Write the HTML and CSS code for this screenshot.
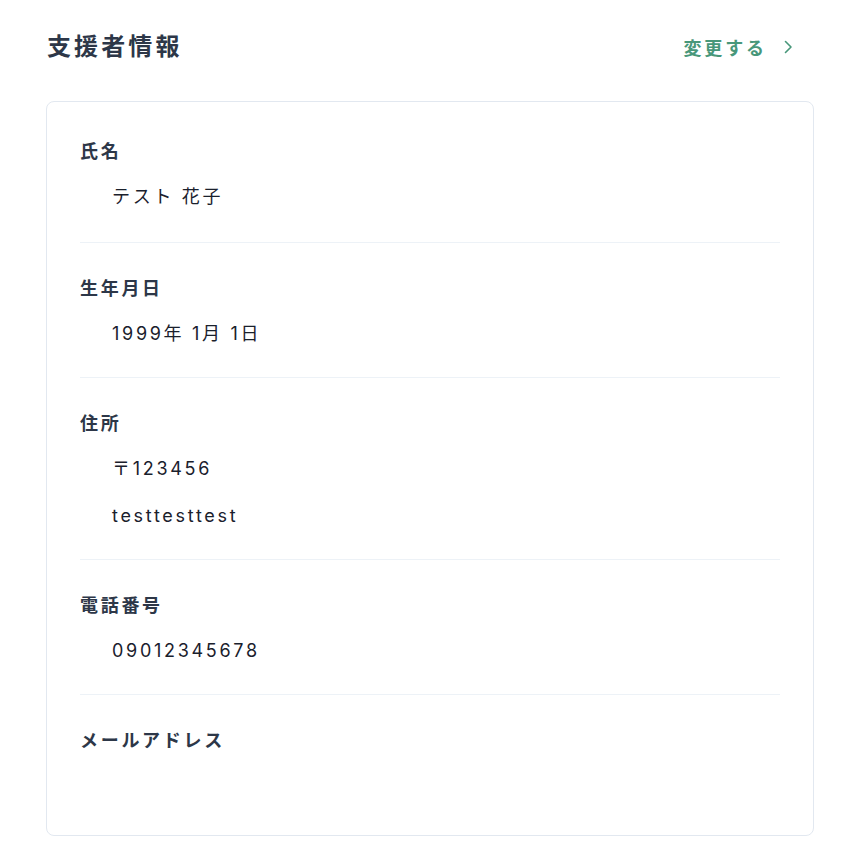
FILE: index.html
```html
<!DOCTYPE html>
<html lang="ja">
<head>
<meta charset="utf-8">
<link rel="stylesheet" href="styles.css">
</head>
<body>
<div class="page">
  <div class="header">
    <h1 class="title">支援者情報</h1>
    <a class="edit-link" href="#">変更する
      <svg class="chevron" width="10" height="14" viewBox="0 0 10 14"><path d="M2.5 1.5 L8 7 L2.5 12.5" fill="none" stroke="currentColor" stroke-width="1.6" stroke-linecap="round" stroke-linejoin="round"/></svg>
    </a>
  </div>
  <div class="card">
    <div class="item">
      <div class="label">氏名</div>
      <div class="values"><div class="value">テスト 花子</div></div>
    </div>
    <div class="item">
      <div class="label">生年月日</div>
      <div class="values"><div class="value">1999年 1月 1日</div></div>
    </div>
    <div class="item">
      <div class="label">住所</div>
      <div class="values">
        <div class="value">〒123456</div>
        <div class="value">testtesttest</div>
      </div>
    </div>
    <div class="item">
      <div class="label">電話番号</div>
      <div class="values"><div class="value">09012345678</div></div>
    </div>
    <div class="item last">
      <div class="label">メールアドレス</div>
      <div class="values"><div class="value empty"></div></div>
    </div>
  </div>
</div>
</body>
</html>
```

FILE: styles.css
```css
html, body {
  margin: 0;
  padding: 0;
  background: #ffffff;
}
body {
  font-family: "Inter", "Noto Sans CJK JP", sans-serif;
  color: #1a202c;
}
.page {
  width: 768px;
  margin-left: 46px;
  padding-top: 28px;
}
.header {
  display: flex;
  align-items: center;
  justify-content: space-between;
  height: 38px;
}
.title {
  margin: 0;
  font-size: 24px;
  font-weight: 700;
  letter-spacing: 0.13em;
  color: #2d3748;
  line-height: 38px;
  padding-left: 1px;
}
.edit-link {
  display: flex;
  align-items: center;
  gap: 16px;
  margin-right: 21px;
  color: #48977a;
  text-decoration: none;
  font-size: 18px;
  font-weight: 600;
  letter-spacing: 0.16em;
}
.chevron {
  display: block;
  color: #48977a;
}
.card {
  margin-top: 35px;
  border: 1px solid #e2e8f0;
  border-radius: 8px;
  padding: 5px 33px 6px 33px;
}
.item {
  padding: 32px 0 29px;
  border-bottom: 1px solid #edf2f7;
}
.item:first-child {
  padding-top: 31px;
  padding-bottom: 31px;
}
.item.last {
  border-bottom: none;
}
.label {
  font-size: 18px;
  font-weight: 700;
  line-height: 28px;
  letter-spacing: 0.15em;
  color: #2d3748;
}
.values {
  padding-left: 32px;
  margin-top: 17px;
  display: flex;
  flex-direction: column;
  gap: 19px;
}
.value {
  font-size: 18px;
  line-height: 28px;
  letter-spacing: 0.15em;
  color: #1a202c;
}
.value.empty {
  height: 28px;
}
```
